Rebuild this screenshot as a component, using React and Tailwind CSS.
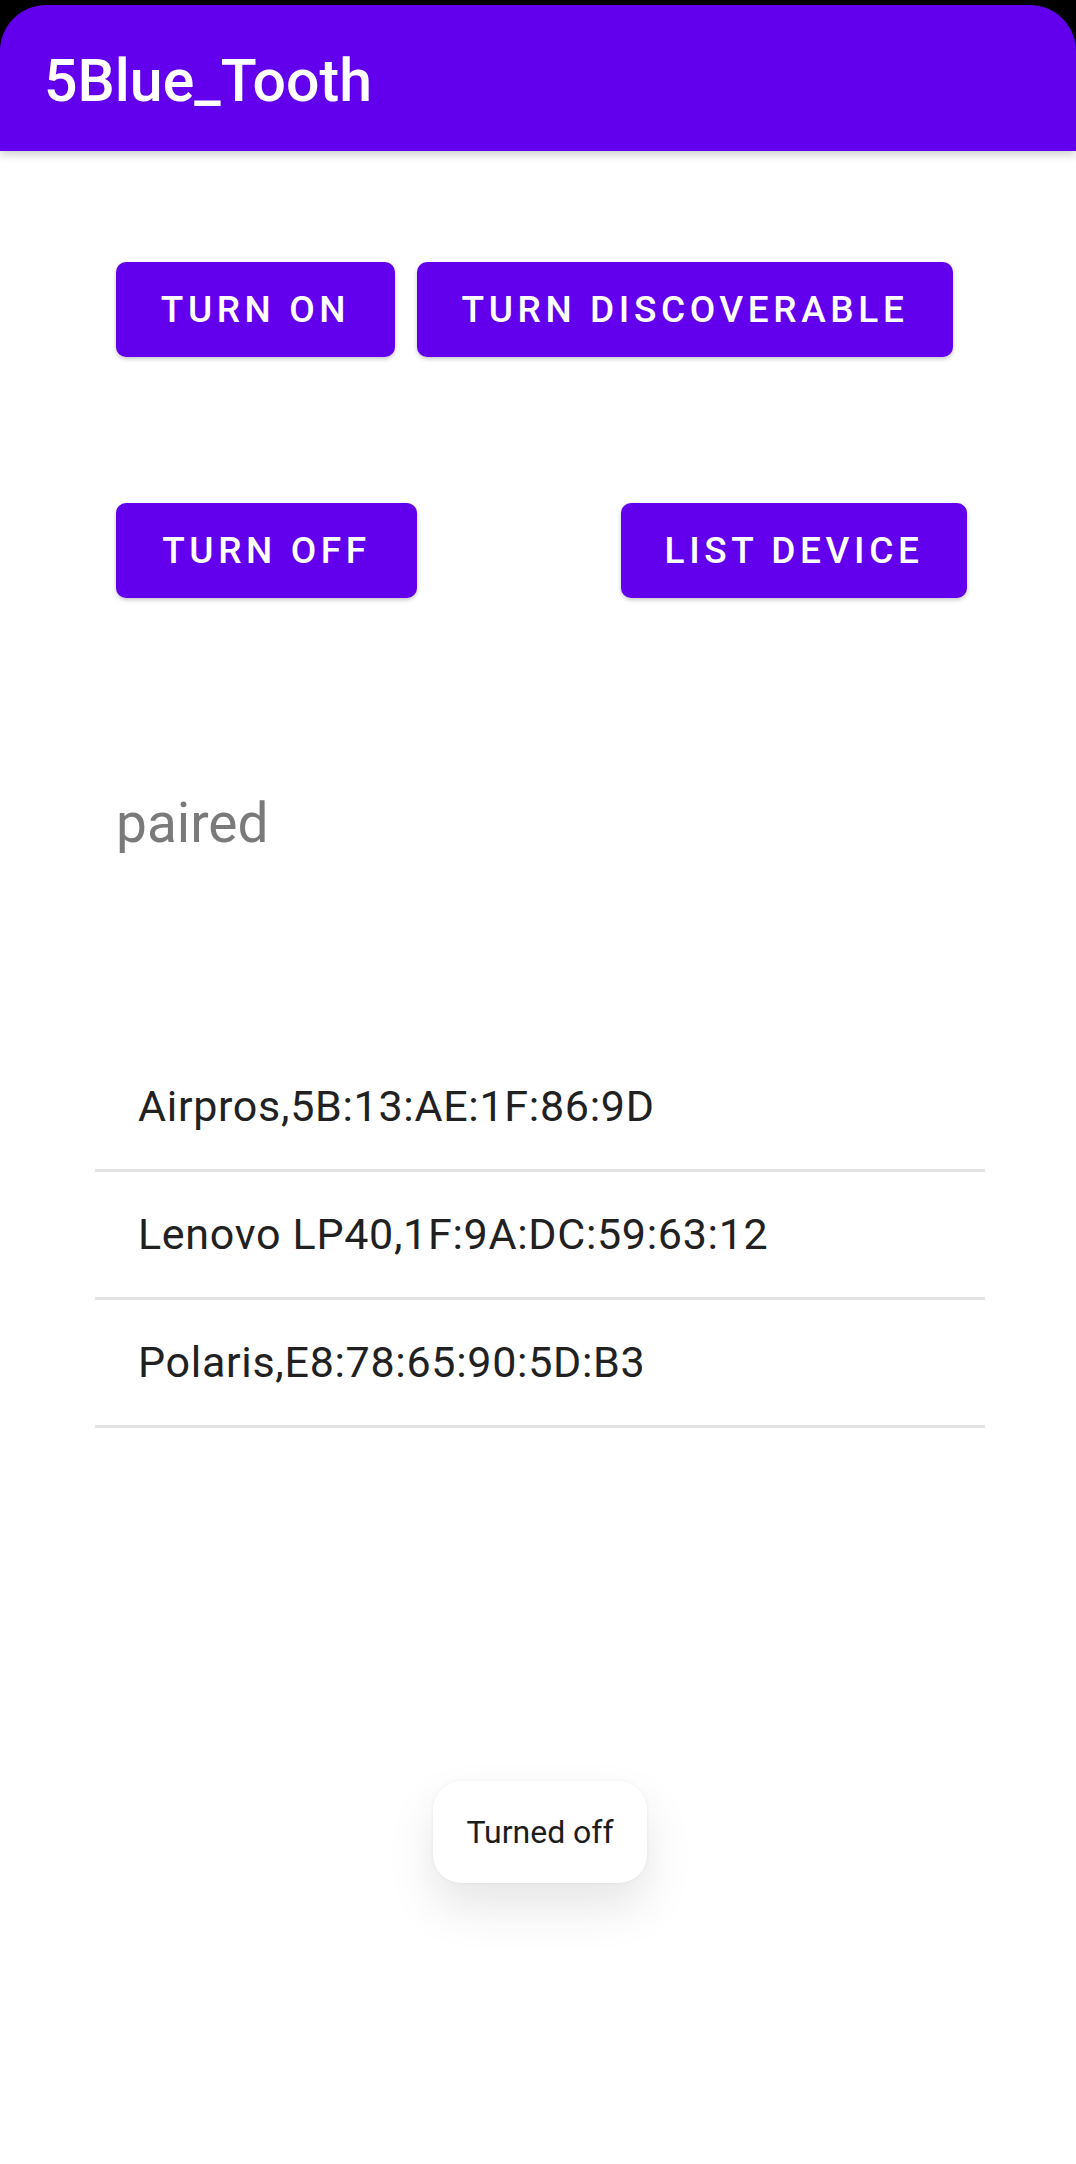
import React from 'react';

const devices = [
  'Airpros,5B:13:AE:1F:86:9D',
  'Lenovo LP40,1F:9A:DC:59:63:12',
  'Polaris,E8:78:65:90:5D:B3',
];

const Btn = ({ label, width }) => (
  <button
    className={`${width} h-[95px] rounded-[10px] bg-[#6200ee] text-white text-[37px] font-medium tracking-[4.6px] uppercase flex items-center justify-center shadow-[0_2px_4px_rgba(0,0,0,0.22)]`}
  >
    {label}
  </button>
);

export default function App() {
  return (
    <div
      className="relative w-[1076px] h-[2164px] bg-white overflow-hidden"
      style={{ fontFamily: 'Roboto, "Noto Sans", sans-serif' }}
    >
      <div className="bg-black pt-[5px]">
        <header className="h-[146px] bg-[#6200ee] rounded-t-[46px] flex items-center pl-[44px] pt-[6px] shadow-[0_4px_8px_rgba(0,0,0,0.18)] relative z-10">
          <h1 className="text-white text-[59px] font-medium">5Blue_Tooth</h1>
        </header>
      </div>

      <div className="pl-[116px]">
        <div className="flex gap-[22px] mt-[111px]">
          <Btn label="Turn On" width="w-[279px]" />
          <Btn label="Turn Discoverable" width="w-[536px]" />
        </div>
        <div className="flex justify-between w-[851px] mt-[146px]">
          <Btn label="Turn Off" width="w-[301px]" />
          <Btn label="List Device" width="w-[346px]" />
        </div>
        <p className="mt-[194px] h-[62px] leading-[62px] text-[55px] text-[#7a7a7a]">paired</p>
      </div>

      <ul className="ml-[95px] w-[890px] mt-[190px]">
        {devices.map((d) => (
          <li
            key={d}
            className="h-[128px] border-b-[3px] border-[#e3e3e3] flex items-center pl-[43px] text-[43px] tracking-[0.7px] text-[#212121]"
          >
            {d}
          </li>
        ))}
      </ul>

      <div className="absolute left-[433px] top-[1781px] w-[214px] h-[102px] rounded-[28px] bg-white flex items-center justify-center text-[32px] text-[#1c1c1c] shadow-[0_24px_48px_rgba(0,0,0,0.10),0_0_4px_rgba(0,0,0,0.06)]">
        Turned off
      </div>
    </div>
  );
}
